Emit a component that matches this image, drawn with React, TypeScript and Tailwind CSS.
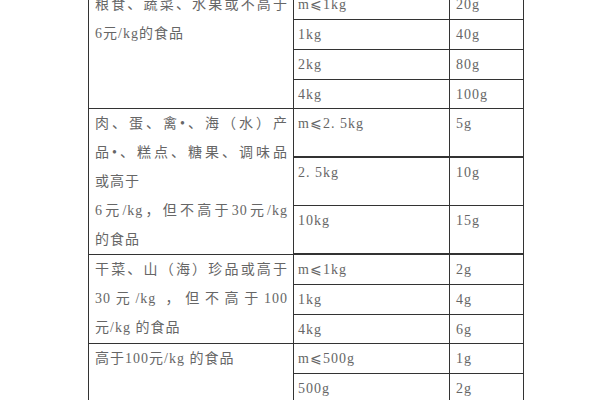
import { Fragment } from 'react';

const font = { fontFamily: '"Liberation Serif", "Noto Sans CJK SC", serif' };

interface Section {
  lines: { text: string; justify?: boolean }[];
  rows: { weight: string; sample: string; height: string }[];
  span: string;
}

const sections: Section[] = [
  {
    lines: [
      { text: '粮食、蔬菜、水果或不高于', justify: true },
      { text: '6元/kg的食品' },
    ],
    span: 'row-span-4',
    rows: [
      { weight: 'm⩽1kg', sample: '20g', height: 'h-[29px]' },
      { weight: '1kg', sample: '40g', height: 'h-[29px]' },
      { weight: '2kg', sample: '80g', height: 'h-[29px]' },
      { weight: '4kg', sample: '100g', height: 'h-[28px]' },
    ],
  },
  {
    lines: [
      { text: '肉、蛋、禽•、海（水）产', justify: true },
      { text: '品•、糕点、糖果、调味品', justify: true },
      { text: '或高于' },
      { text: '6元/kg，但不高于30元/kg', justify: true },
      { text: '的食品' },
    ],
    span: 'row-span-3',
    rows: [
      { weight: 'm⩽2. 5kg', sample: '5g', height: 'h-[47px]' },
      { weight: '2. 5kg', sample: '10g', height: 'h-[47px]' },
      { weight: '10kg', sample: '15g', height: 'h-[47px]' },
    ],
  },
  {
    lines: [
      { text: '干菜、山（海）珍品或高于', justify: true },
      { text: '30元/kg ，但不高于100', justify: true },
      { text: '元/kg 的食品' },
    ],
    span: 'row-span-3',
    rows: [
      { weight: 'm⩽1kg', sample: '2g', height: 'h-[29px]' },
      { weight: '1kg', sample: '4g', height: 'h-[29px]' },
      { weight: '4kg', sample: '6g', height: 'h-[28px]' },
    ],
  },
  {
    lines: [{ text: '高于100元/kg 的食品' }],
    span: 'row-span-2',
    rows: [
      { weight: 'm⩽500g', sample: '1g', height: 'h-[29px]' },
      { weight: '500g', sample: '2g', height: 'h-[29px]' },
    ],
  },
];

export default function App() {
  return (
    <div className="w-[600px] h-[400px] overflow-hidden bg-white" style={font}>
      <div className="ml-[88px] mt-[-11px] w-[436px] grid grid-cols-[204px_155px_73px] gap-px p-px bg-[#333] text-[14px] leading-[29px] tracking-[1px] text-[#666]">
        {sections.map((section, si) =>
          section.rows.map((row, ri) => (
            <Fragment key={`${si}-${ri}`}>
              {ri === 0 && (
                <div className={`${section.span} bg-white pl-[6px] pr-[5px]`}>
                  {section.lines.map((line, li) => (
                    <div
                      key={li}
                      className={`whitespace-nowrap ${line.justify ? 'text-justify [text-align-last:justify]' : ''}`}
                    >
                      {line.text}
                    </div>
                  ))}
                </div>
              )}
              <div className={`${row.height} bg-white pl-[4px]`}>{row.weight}</div>
              <div className={`${row.height} bg-white pl-[6px]`}>{row.sample}</div>
            </Fragment>
          ))
        )}
      </div>
    </div>
  );
}
